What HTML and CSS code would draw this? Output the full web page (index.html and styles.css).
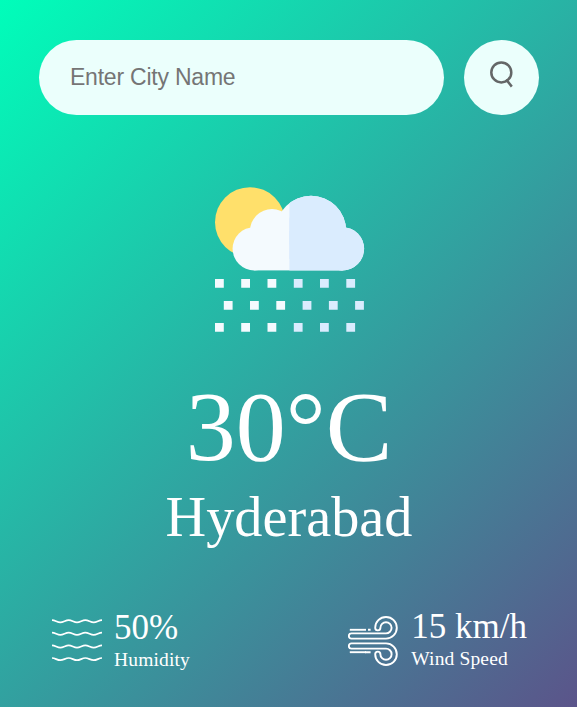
FILE: index.html
```html
<!DOCTYPE html>
<html lang="en">
<head>
<meta charset="utf-8">
<title>Weather</title>
<link rel="stylesheet" href="styles.css">
</head>
<body>
<main class="card">
  <form class="search">
    <input class="search-input" type="text" placeholder="Enter City Name" spellcheck="false">
    <button class="search-button" type="button" aria-label="Search">
      <svg class="search-icon" viewBox="0 0 26 28" fill="none" stroke="#646767" stroke-width="2.5">
        <circle cx="12.3" cy="12.4" r="10"/>
        <path d="M17.2 19.6L22.8 26.6"/>
      </svg>
    </button>
  </form>
  <section class="weather">
    <svg class="weather-icon" viewBox="215 187 150 146">
      <defs>
        <clipPath id="right"><rect x="289.4" y="187" width="76" height="146"/></clipPath>
        <g id="cloud">
          <circle cx="254.2" cy="248.8" r="21.6"/>
          <circle cx="342.5" cy="248.8" r="21.6"/>
          <circle cx="272" cy="231" r="22"/>
          <circle cx="311" cy="231" r="35.2"/>
          <rect x="254.2" y="231" width="88.3" height="39.4"/>
        </g>
      </defs>
      <circle cx="250" cy="222.2" r="35" fill="#ffe06b"/>
      <use href="#cloud" fill="#f4fafe"/>
      <g clip-path="url(#right)"><use href="#cloud" fill="#daecfe"/></g>
      <g fill="#f4fafe">
        <path d="M215 279h8.8v8.8H215zM241.2 279h8.8v8.8h-8.8zM267.5 279h8.8v8.8h-8.8z"/>
        <path d="M223.8 301h8.8v8.8h-8.8zM250 301h8.8v8.8H250zM276.3 301h8.8v8.8h-8.8z"/>
        <path d="M215 322.9h8.8v8.8H215zM241.2 322.9h8.8v8.8h-8.8zM267.5 322.9h8.8v8.8h-8.8z"/>
      </g>
      <g fill="#daecfe">
        <path d="M293.8 279h8.8v8.8h-8.8zM320 279h8.8v8.8H320zM346.3 279h8.8v8.8h-8.8z"/>
        <path d="M302.6 301h8.8v8.8h-8.8zM328.9 301h8.8v8.8h-8.8zM355.1 301h8.8v8.8h-8.8z"/>
        <path d="M293.8 322.9h8.8v8.8h-8.8zM320 322.9h8.8v8.8H320zM346.3 322.9h8.8v8.8h-8.8z"/>
      </g>
    </svg>
    <h1 class="temp">30°C</h1>
    <h2 class="city">Hyderabad</h2>
  </section>
  <section class="details">
    <div class="detail">
      <svg class="detail-icon" viewBox="0 0 50 50" fill="none" stroke="#fff" stroke-width="1.7">
        <path d="M0 4.1C3.2 4.1 5.1 6.3 8.3 6.3S13.5 4.1 16.7 4.1 21.8 6.3 25 6.3 30.1 4.1 33.3 4.1 38.5 6.3 41.7 6.3 46.8 4.1 50 4.1"/>
        <path d="M0 16.7C3.2 16.7 5.1 18.9 8.3 18.9S13.5 16.7 16.7 16.7 21.8 18.9 25 18.9 30.1 16.7 33.3 16.7 38.5 18.9 41.7 18.9 46.8 16.7 50 16.7"/>
        <path d="M0 29.4C3.2 29.4 5.1 31.6 8.3 31.6S13.5 29.4 16.7 29.4 21.8 31.6 25 31.6 30.1 29.4 33.3 29.4 38.5 31.6 41.7 31.6 46.8 29.4 50 29.4"/>
        <path d="M0 42C3.2 42 5.1 44.2 8.3 44.2S13.5 42 16.7 42 21.8 44.2 25 44.2 30.1 42 33.3 42 38.5 44.2 41.7 44.2 46.8 42 50 42"/>
      </svg>
      <div>
        <p class="value">50%</p>
        <p class="label">Humidity</p>
      </div>
    </div>
    <div class="detail wind">
      <svg class="detail-icon" viewBox="0 0 50 50" fill="none" stroke="#fff" stroke-width="1.9">
        <g id="gust">
          <path d="M3.4 17.4H38a5.6 5.6 0 1 0-5.6-5.6a2.6 2.6 0 0 1-5.2 0A10.8 10.8 0 1 1 38 22.6H3.4a2.6 2.6 0 0 1 0-5.2z"/>
          <path d="M1.8 13.8H18"/>
        </g>
        <path d="M20 13.8h2.6M17 36.2h5.6"/>
        <use href="#gust" transform="matrix(1 0 0 -1 0 50)"/>
      </svg>
      <div>
        <p class="value">15 km/h</p>
        <p class="label">Wind Speed</p>
      </div>
    </div>
  </section>
</main>
</body>
</html>
```
FILE: styles.css
```css
* {
  box-sizing: border-box;
  margin: 0;
  padding: 0;
}

body {
  font-family: "Liberation Serif", "Times New Roman", serif;
  color: #fff;
}

.card {
  width: 577px;
  height: 707px;
  padding: 40px 38px 0 39px;
  background: linear-gradient(135deg, #00feba, #5b548a);
  overflow: hidden;
}

.search {
  display: flex;
  gap: 20px;
}

.search-input {
  width: 405px;
  height: 75px;
  padding: 0 31px;
  border: 0;
  outline: 0;
  border-radius: 38px;
  background: #ebfffc;
  color: #555;
  font: 23px "Liberation Sans", Arial, sans-serif;
  letter-spacing: -0.22px;
}

.search-input::placeholder {
  color: #757575;
}

.search-button {
  display: flex;
  justify-content: center;
  width: 75px;
  height: 75px;
  padding-top: 20px;
  border: 0;
  border-radius: 50%;
  background: #ebfffc;
}

.search-icon {
  width: 26px;
  height: 28px;
}

.weather {
  padding-top: 72px;
  text-align: center;
}

.weather-icon {
  display: block;
  width: 150px;
  height: 146px;
  margin: 0 0 0 176px;
}

.temp {
  margin-top: 36px;
  font-size: 100px;
  font-weight: 500;
  line-height: 115px;
}

.city {
  margin-top: 1px;
  font-size: 56.25px;
  font-weight: 500;
  line-height: 64px;
}

.details {
  display: flex;
  justify-content: space-between;
  padding: 59px 12px 0 13px;
}

.detail {
  display: flex;
  gap: 12px;
}

.detail-icon {
  width: 50px;
  height: 50px;
  margin-top: 8px;
}

.wind {
  gap: 13px;
}

.wind .value {
  margin-top: -1px;
}

.value {
  font-size: 35px;
  line-height: 40px;
}

.label {
  margin-top: 1px;
  font-size: 19.5px;
  line-height: 22px;
  letter-spacing: 0.15px;
}
```
